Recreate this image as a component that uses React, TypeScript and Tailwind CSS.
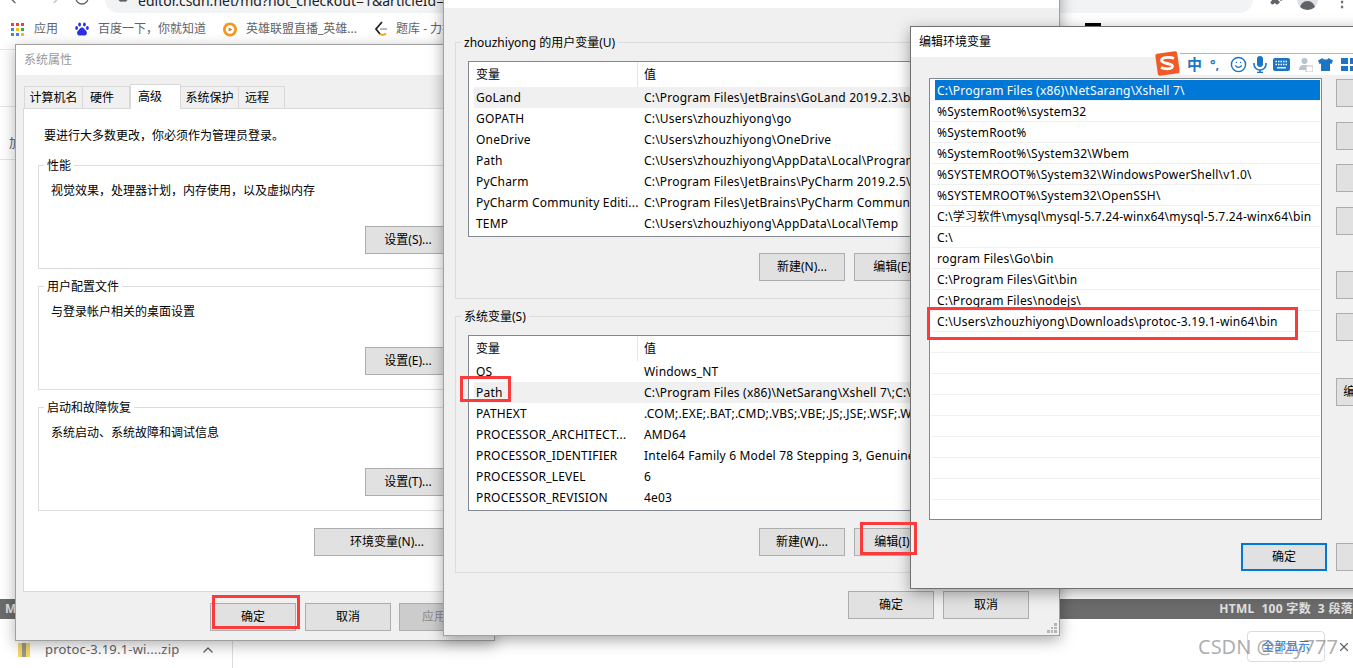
import { ReactNode } from "react";
import { ArrowLeft, ArrowRight, RotateCw, ChevronUp, Star, Puzzle, Smile, X, Lock } from "lucide-react";

const userVars = [
  ["GoLand", "C:\\Program Files\\JetBrains\\GoLand 2019.2.3\\bin;"],
  ["GOPATH", "C:\\Users\\zhouzhiyong\\go"],
  ["OneDrive", "C:\\Users\\zhouzhiyong\\OneDrive"],
  ["Path", "C:\\Users\\zhouzhiyong\\AppData\\Local\\Programs\\Python"],
  ["PyCharm", "C:\\Program Files\\JetBrains\\PyCharm 2019.2.5\\bin;"],
  ["PyCharm Community Editi...", "C:\\Program Files\\JetBrains\\PyCharm Community Edition"],
  ["TEMP", "C:\\Users\\zhouzhiyong\\AppData\\Local\\Temp"],
];

const sysVars = [
  ["OS", "Windows_NT"],
  ["Path", "C:\\Program Files (x86)\\NetSarang\\Xshell 7\\;C:\\Windows"],
  ["PATHEXT", ".COM;.EXE;.BAT;.CMD;.VBS;.VBE;.JS;.JSE;.WSF;.WSH;.MSC"],
  ["PROCESSOR_ARCHITECT...", "AMD64"],
  ["PROCESSOR_IDENTIFIER", "Intel64 Family 6 Model 78 Stepping 3, GenuineIntel"],
  ["PROCESSOR_LEVEL", "6"],
  ["PROCESSOR_REVISION", "4e03"],
];

const pathRows = [
  "C:\\Program Files (x86)\\NetSarang\\Xshell 7\\",
  "%SystemRoot%\\system32",
  "%SystemRoot%",
  "%SystemRoot%\\System32\\Wbem",
  "%SYSTEMROOT%\\System32\\WindowsPowerShell\\v1.0\\",
  "%SYSTEMROOT%\\System32\\OpenSSH\\",
  "C:\\学习软件\\mysql\\mysql-5.7.24-winx64\\mysql-5.7.24-winx64\\bin",
  "C:\\",
  "rogram Files\\Go\\bin",
  "C:\\Program Files\\Git\\bin",
  "C:\\Program Files\\nodejs\\",
  "C:\\Users\\zhouzhiyong\\Downloads\\protoc-3.19.1-win64\\bin",
  "", "", "", "", "", "", "", "",
];

function Btn({ children, className = "" }: { children: ReactNode; className?: string }) {
  return (
    <div className={`flex h-[28px] w-[86px] shrink-0 items-center justify-center whitespace-nowrap border border-[#adadad] bg-[#e1e1e1] text-black ${className}`}>
      {children}
    </div>
  );
}

function Group({ label, className = "", children }: { label: string; className?: string; children: ReactNode }) {
  return (
    <fieldset className={`border border-[#dcdcdc] ${className}`}>
      <legend className="ml-[5px] h-[16px] px-[3px] leading-[18px]">{label}</legend>
      {children}
    </fieldset>
  );
}

function SettingsGroup({ label, text, btn }: { label: string; text: string; btn: string }) {
  return (
    <Group label={label} className="h-[112px]">
      <p className="mt-[9px] h-[16px] pl-[12px] leading-[18px]">{text}</p>
      <div className="mt-[28px] flex justify-end pr-[21px]">
        <Btn>{btn}</Btn>
      </div>
    </Group>
  );
}

function VarList({ rows, active }: { rows: string[][]; active: number }) {
  return (
    <div className="ml-[12px] h-[176px] w-[566px] overflow-hidden border border-[#828790] bg-white">
      <div className="flex h-[25px] items-center pl-[7px]">
        <span className="w-[161px]">变量</span>
        <span className="h-full w-[7px] border-l border-[#e5e5e5]" />
        <span>值</span>
      </div>
      {rows.map(([name, value], i) => (
        <div key={name} className={`ml-[5px] flex h-[21px] items-center whitespace-nowrap pl-[2px] tracking-[0.2px] ${i === active ? "bg-[#f0f0f0]" : ""}`}>
          <span className="w-[168px] shrink-0">{name}</span>
          <span>{value}</span>
        </div>
      ))}
    </div>
  );
}

function RedBox({ className }: { className: string }) {
  return <div className={`absolute z-40 border-[3px] border-[#fb3b3b] ${className}`} />;
}

function AppsDots() {
  const colors = ["#ea4335", "#ea4335", "#ea4335", "#4285f4", "#fbbc04", "#34a853", "#34a853", "#4285f4", "#fbbc04"];
  return (
    <div className="grid h-[13px] w-[13px] grid-cols-3 gap-[2px]">
      {colors.map((c, i) => (
        <span key={i} className="block" style={{ backgroundColor: c }} />
      ))}
    </div>
  );
}

function BaiduPaw() {
  return (
    <svg width="14" height="15" viewBox="0 0 14 15" fill="#2932e1">
      <ellipse cx="4.6" cy="2.4" rx="1.4" ry="2" />
      <ellipse cx="9.4" cy="2.4" rx="1.4" ry="2" />
      <ellipse cx="1.6" cy="6" rx="1.4" ry="2" />
      <ellipse cx="12.4" cy="6" rx="1.4" ry="2" />
      <path d="M7 5.6c2 0 2.6 2 4 3.2 1.6 1.4 1 4.6-1.4 4.8-1 .1-1.8-.4-2.6-.4s-1.6.5-2.6.4C2 13.4 1.4 10.2 3 8.8 4.4 7.6 5 5.6 7 5.6z" />
    </svg>
  );
}

function LolIcon() {
  return (
    <svg width="16" height="16" viewBox="0 0 16 16">
      <circle cx="8" cy="8.5" r="7" fill="#f39a1e" />
      <circle cx="8" cy="8.5" r="4.2" fill="#fff" />
      <path d="M6.6 6.5l3.600 2-3.600 2z" fill="#e2711d" />
      <path d="M3 2l3 2-2 1z" fill="#f39a1e" />
    </svg>
  );
}

function CodeIcon() {
  return (
    <svg width="14" height="16" viewBox="0 0 14 16" fill="none" strokeWidth="1.8">
      <path d="M8 1L2 8l4 5" stroke="#222" />
      <path d="M6 13c2 1.5 4 1 6-.5" stroke="#f89f1b" />
      <path d="M6 8h7" stroke="#b3b3b3" />
    </svg>
  );
}

function SogouBar() {
  return (
    <div className="absolute left-[1154px] top-[50px] z-30 flex h-[27px] w-[199px] items-start">
      <svg width="27" height="27" viewBox="0 0 27 27" className="shrink-0">
        <rect x="2.5" y="2.5" width="22" height="22" rx="2" fill="#f15a24" transform="rotate(-8 13.5 13.5)" />
        <path d="M20 8.500c-3-1.500-10-1.500-12 .5-1.500 2 1 4 5 4.500s6.500 2 5 4c-2 2-8 1.500-11 0" fill="none" stroke="#fff" strokeWidth="2.8" />
      </svg>
      <div className="-ml-[1px] mt-[3px] flex h-[22px] flex-1 items-center overflow-hidden border-t border-[#b5b5b5] bg-white pl-[7px] text-[#1b75c4]">
        <span className="w-[14px] shrink-0 text-[15px] font-bold leading-none">中</span>
        <span className="ml-[9px] w-[11px] shrink-0 text-[13px] font-bold leading-none">°,</span>
        <Smile size={17} strokeWidth={2} className="ml-[9px] shrink-0" />
        <svg width="14" height="17" viewBox="0 0 14 17" fill="#1b75c4" className="ml-[6px] shrink-0">
          <rect x="4" y="0" width="6" height="11" rx="3" />
          <path d="M1 7v1a6 6 0 0012 0V7M7 14v3M4 16.500h6" fill="none" stroke="#1b75c4" strokeWidth="1.600" />
        </svg>
        <svg width="17" height="13" viewBox="0 0 17 13" className="ml-[6px] shrink-0">
          <rect width="17" height="13" rx="2" fill="#1b75c4" />
          <path d="M2.500 3.500h12M2.500 6.500h12" stroke="#fff" strokeWidth="1.300" strokeDasharray="1.500 1" />
          <path d="M4 9.800h9" stroke="#fff" strokeWidth="1.300" />
        </svg>
        <svg width="14" height="15" viewBox="0 0 14 15" className="ml-[9px] shrink-0">
          <circle cx="5.500" cy="4" r="3" fill="#b8c4cc" />
          <path d="M0 13c0-4 2-5 5.500-5s5 1 5 5z" fill="#b8c4cc" />
          <rect x="7" y="9" width="7" height="6" fill="#fff" stroke="#b8c4cc" />
        </svg>
        <svg width="15" height="15" viewBox="0 0 15 15" className="ml-[5px] shrink-0" fill="#1b75c4">
          <path d="M4.500 1L0 3.500l1.500 3.500 1.500-.5V14h9V6.500l1.500.5L15 3.500 10.500 1c-.5 2-5.500 2-6 0z" />
        </svg>
        <div className="ml-[8px] grid h-[13px] w-[16px] shrink-0 grid-cols-2 gap-[2px]">
          <span className="bg-[#1b75c4]" />
          <span className="bg-[#1b75c4]" />
          <span className="bg-[#1b75c4]" />
          <span className="bg-[#1b75c4]" />
        </div>
      </div>
    </div>
  );
}

function Browser() {
  return (
    <div className="flex h-full flex-col bg-white text-[12px]">
      <div className="flex h-[14px] items-start overflow-hidden text-[#5f6368]">
        <div className="flex w-[105px] shrink-0 items-end pl-[7px]">
          <ArrowLeft size={16} strokeWidth={2} className="-mt-[10px] shrink-0" />
          <ArrowRight size={16} strokeWidth={2} className="-mt-[10px] ml-[23px] shrink-0 text-[#c4c4c4]" />
          <RotateCw size={16} strokeWidth={2} className="-mt-[10px] ml-[12px] shrink-0" />
        </div>
        <div className="-mt-[15px] flex h-[28px] w-[1148px] shrink-0 items-end rounded-[14px] bg-[#f1f3f4] pb-[5px] pl-[13px] pr-[13px]">
          <Lock size={10} fill="#5f6368" className="mb-[6px] shrink-0" />
          <span className="ml-[10px] text-[14px] leading-[14px] text-[#202124]">editor.csdn.net/md?not_checkout=1&amp;articleId=121507823</span>
          <Star size={14} className="mb-[7px] ml-auto shrink-0" />
        </div>
        <div className="flex flex-1 items-start pl-[17px]">
          <Puzzle size={14} fill="#5f6368" className="-mt-[9px] shrink-0" />
          <div className="-mt-[11px] ml-[13px] flex h-[21px] w-[21px] shrink-0 items-end justify-center overflow-hidden rounded-full bg-[#dee1e6]">
            <div className="h-[9px] w-[15px] rounded-t-full bg-[#5f6368]" />
          </div>
          <span className="-mt-[5px] ml-[17px] text-[14px] font-bold leading-none">⋮</span>
        </div>
      </div>
      <div className="flex h-[30px] items-center pl-[11px] text-[#5f6368]">
        <AppsDots />
        <span className="ml-[10px]">应用</span>
        <span className="ml-[17px]"><BaiduPaw /></span>
        <span className="ml-[9px]">百度一下，你就知道</span>
        <span className="ml-[16px]"><LolIcon /></span>
        <span className="ml-[8px]">英雄联盟直播_英雄...</span>
        <span className="ml-[17px]"><CodeIcon /></span>
        <span className="ml-[8px]">题库 - 力扣</span>
        <div className="ml-auto mr-[252px] mt-[-8px] h-[4px] w-[16px] bg-black" />
      </div>
      <div className="flex flex-1 flex-col text-[#555]">
        <div className="h-[6px] border-b border-[#e5e5e5]" />
        <div className="h-[57px] border-b border-[#e5e5e5]" />
        <div className="flex h-[53px] items-end border-b border-[#e5e5e5] pb-[6px] pl-[9px]">加</div>
      </div>
      <div className="flex h-[20px] items-center justify-between bg-[#6b6b6b] pl-[5px] font-bold text-[#e0e0e0]">
        <span>M</span>
        <span className="whitespace-nowrap tracking-[0.3px]">HTML&nbsp;&nbsp;100 字数&nbsp;&nbsp;3 段落</span>
      </div>
      <div className="relative flex h-[49px] items-center">
        <div className="mt-[12px] flex h-[37px] w-[233px] items-center border-r border-[#dadce0] pl-[18px]">
          <div className="flex h-[14px] w-[12px] justify-center bg-[#f5d76e]">
            <div className="h-full w-[4px] bg-[#9a9a8a]" />
          </div>
          <span className="ml-[15px] text-[13px] tracking-[0.2px] text-[#5f6368]">protoc-3.19.1-wi....zip</span>
          <ChevronUp size={16} className="ml-[21px] text-[#5f6368]" />
        </div>
        <div className="ml-auto mr-[28px] mt-[6px] flex h-[31px] w-[78px] items-center justify-center rounded-[4px] border border-[#dadce0] text-[#1a73e8]">
          全部显示
        </div>
        <X size={14} className="absolute right-[2px] top-[21px] text-[#5f6368]" />
        <span className="absolute left-[1198px] top-[13px] whitespace-nowrap text-[20px] text-[#777]/60">CSDN @zzy777</span>
      </div>
    </div>
  );
}

export default function App() {
  return (
    <div className="relative h-[668px] w-[1353px] overflow-hidden font-['Noto_Sans','Noto_Sans_CJK_SC',sans-serif] text-[12px] text-black">
      <Browser />

      {/* 系统属性 */}
      <div className="absolute left-[15px] top-[44px] z-10 flex h-[597px] w-[480px] flex-col border border-[#a0a0a0] bg-[#f0f0f0] shadow-[0_4px_14px_rgba(0,0,0,0.3)]">
        <div className="flex h-[30px] shrink-0 items-center bg-white pl-[8px] text-[#999]">系统属性</div>
        <div className="mt-[9px] flex h-[24px] pl-[8px]">
          <div className="mt-[2px] flex w-[59px] items-center justify-center border border-b-0 border-[#d9d9d9]">计算机名</div>
          <div className="mt-[2px] flex w-[47px] items-center border-r border-t border-[#d9d9d9] pl-[7px]">硬件</div>
          <div className="z-10 flex h-[25px] w-[51px] items-start border border-b-0 border-[#d9d9d9] bg-white pl-[7px] pt-[3px]">高级</div>
          <div className="mt-[2px] flex w-[58px] items-center justify-center border-r border-t border-[#d9d9d9]">系统保护</div>
          <div className="mt-[2px] flex w-[46px] items-center border-r border-t border-[#d9d9d9] pl-[6px]">远程</div>
        </div>
        <div className="ml-[7px] flex h-[484px] w-[465px] flex-col border border-[#d9d9d9] bg-white px-[14px]">
          <p className="ml-[6px] mt-[18px] h-[16px] leading-[18px]">要进行大多数更改，你必须作为管理员登录。</p>
          <div className="mt-[14px] flex flex-col gap-[9px]">
            <SettingsGroup label="性能" text="视觉效果，处理器计划，内存使用，以及虚拟内存" btn="设置(S)..." />
            <SettingsGroup label="用户配置文件" text="与登录帐户相关的桌面设置" btn="设置(E)..." />
            <SettingsGroup label="启动和故障恢复" text="系统启动、系统故障和调试信息" btn="设置(T)..." />
          </div>
          <div className="mt-[17px] flex justify-end pr-[13px]">
            <Btn className="!w-[146px]">环境变量(N)...</Btn>
          </div>
        </div>
        <div className="mt-[11px] flex gap-[9px] pl-[194px]">
          <Btn>确定</Btn>
          <Btn>取消</Btn>
          <Btn className="-ml-px !bg-[#cccccc] pr-[16px] !text-[#8a8a8a]">应用</Btn>
        </div>
      </div>

      {/* 环境变量 */}
      <div className="absolute left-[443px] top-[-23px] z-20 flex h-[659px] w-[617px] flex-col border border-[#a0a0a0] bg-[#f0f0f0] shadow-[0_4px_14px_rgba(0,0,0,0.35)]">
        <div className="h-[30px] shrink-0 bg-white" />
        <div className="flex flex-col gap-[9px] pl-[11px] pr-[12px] pt-[26px]">
          <Group label="zhouzhiyong 的用户变量(U)" className="h-[265px]">
            <div className="mt-[11px]"><VarList rows={userVars} active={0} /></div>
            <div className="mt-[16px] flex gap-[9px] pl-[303px]">
              <Btn>新建(N)...</Btn>
              <Btn>编辑(E)...</Btn>
            </div>
          </Group>
          <Group label="系统变量(S)" className="h-[265px]">
            <div className="mt-[11px]"><VarList rows={sysVars} active={1} /></div>
            <div className="mt-[17px] flex gap-[9px] pl-[303px]">
              <Btn>新建(W)...</Btn>
              <Btn className="pr-[10px]">编辑(I)</Btn>
            </div>
          </Group>
        </div>
        <div className="mt-[18px] flex justify-end gap-[9px] pr-[30px]">
          <Btn>确定</Btn>
          <Btn>取消</Btn>
        </div>
        <div className="absolute bottom-[2px] right-[2px] grid h-[10px] w-[10px] grid-cols-3 gap-px">
          <span /><span /><span className="bg-[#b5b5b5]" />
          <span /><span className="bg-[#b5b5b5]" /><span className="bg-[#b5b5b5]" />
          <span className="bg-[#b5b5b5]" /><span className="bg-[#b5b5b5]" /><span className="bg-[#b5b5b5]" />
        </div>
      </div>

      {/* 编辑环境变量 */}
      <div className="absolute left-[910px] top-[26px] z-30 flex h-[563px] w-[521px] flex-col border border-[#707070] bg-[#f0f0f0] shadow-[0_4px_14px_rgba(0,0,0,0.35)]">
        <div className="flex h-[30px] shrink-0 items-center bg-white pl-[8px]">编辑环境变量</div>
        <div className="mt-[21px] flex pl-[18px]">
          <div className="h-[442px] w-[393px] shrink-0 border border-[#828790] bg-white pl-px pr-px pt-px">
            {pathRows.map((row, i) => (
              <div key={i} className="flex h-[21px] items-stretch border-b border-[#f0f0f0]">
                <div className={`ml-[4px] flex flex-1 items-center whitespace-nowrap pl-[2px] pt-[2px] tracking-[0.2px] ${i === 0 ? "bg-[#0078d7] text-white" : ""}`}>
                  {row}
                </div>
              </div>
            ))}
          </div>
          <div className="ml-[14px] mt-px flex flex-col">
            <Btn>新建(N)</Btn>
            <Btn className="mt-[15px]">编辑(E)</Btn>
            <Btn className="mt-[14px]">浏览(B)...</Btn>
            <Btn className="mt-[15px]">删除(D)</Btn>
            <Btn className="mt-[36px]">上移(U)</Btn>
            <Btn className="mt-[14px]">下移(O)</Btn>
            <Btn className="mt-[37px]">编辑文本(T)...</Btn>
          </div>
        </div>
        <div className="mt-[23px] flex gap-[9px] pl-[330px]">
          <Btn className="!border-2 !border-[#0078d7]">确定</Btn>
          <Btn>取消</Btn>
        </div>
      </div>

      <SogouBar />

      <RedBox className="left-[212px] top-[595px] h-[34px] w-[88px]" />
      <RedBox className="left-[460px] top-[376px] h-[26px] w-[51px]" />
      <RedBox className="left-[860px] top-[522px] h-[33px] w-[57px]" />
      <RedBox className="left-[927px] top-[307px] h-[33px] w-[371px]" />
    </div>
  );
}
